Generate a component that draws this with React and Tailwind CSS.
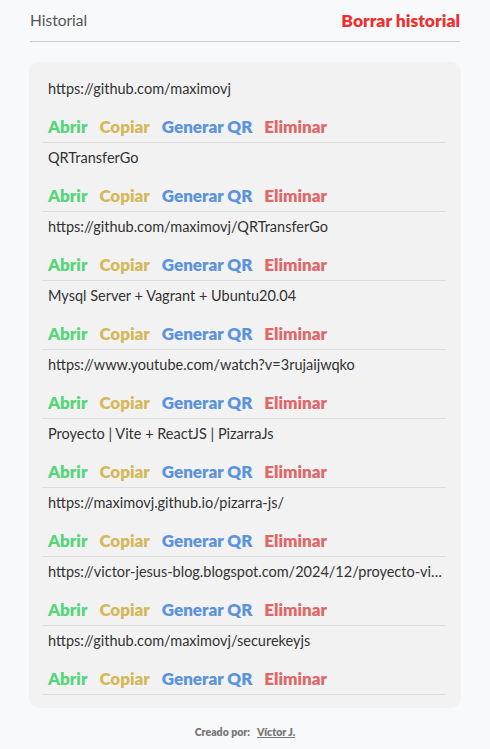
import React from 'react';

const historial = [
  'https://github.com/maximovj',
  'QRTransferGo',
  'https://github.com/maximovj/QRTransferGo',
  'Mysql Server + Vagrant + Ubuntu20.04',
  'https://www.youtube.com/watch?v=3rujaijwqko',
  'Proyecto | Vite + ReactJS | PizarraJs',
  'https://maximovj.github.io/pizarra-js/',
  'https://victor-jesus-blog.blogspot.com/2024/12/proyecto-vite-reactjs-pizarrajs.html',
  'https://github.com/maximovj/securekeyjs',
];

const App = () => {
  return (
    <div className="min-h-[749px] bg-[#f8f9fa] font-['Lato','Open_Sans',sans-serif] text-[#333]">
      {/* Cabecera */}
      <div className="mx-[30px] flex h-[42px] items-center justify-between border-b border-[#cccccc] pt-[1px]">
        <span className="text-[15.5px] text-[#555]">Historial</span>
        <button className="text-[17.5px] font-extrabold text-[#ee2f2f]">Borrar historial</button>
      </div>

      {/* Lista */}
      <div className="mx-[29px] mt-[20px] rounded-[10px] bg-[#f2f2f2] pl-[13px] pr-[15px] pt-[12px] pb-[13px]">
        {historial.map((item, i) => (
          <div key={i} className="border-b border-[#dcdcdc] pl-[6px] pr-[4px] pt-[4px] pb-[4px]">
            <p className="h-[22px] truncate text-[14.5px] leading-[22px] text-[#333]">{item}</p>
            <div className="mt-[16px] flex h-[22px] items-center gap-[12px] text-[17px] font-extrabold leading-[22px]">
              <button className="text-[#56d67a]">Abrir</button>
              <button className="text-[#d5b85a]">Copiar</button>
              <button className="text-[#5b93dc]">Generar QR</button>
              <button className="text-[#e06767]">Eliminar</button>
            </div>
          </div>
        ))}
      </div>

      {/* Pie */}
      <div className="flex h-[48px] items-center justify-center gap-[7px] pt-[2px] text-[10.5px] font-extrabold text-[#777]">
        <span>Creado por:</span>
        <a className="underline">Víctor J.</a>
      </div>
    </div>
  );
};

export default App;
